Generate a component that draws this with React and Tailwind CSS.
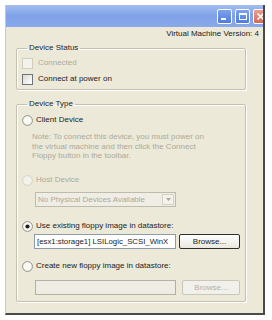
import React from "react";

function Radio({ checked = false, disabled = false }) {
  return (
    <svg width="11" height="11" viewBox="0 0 11 11" className="shrink-0">
      <circle cx="5.5" cy="5.5" r="4.9" fill={disabled ? "#F2F1EB" : "#FAFAF7"} stroke={disabled ? "#D3D1C5" : "#8E8E88"} strokeWidth="1" />
      {checked && <circle cx="5.5" cy="5.5" r="2.1" fill="#1F1F1F" />}
    </svg>
  );
}

function Checkbox({ disabled = false }) {
  return (
    <div
      className={
        disabled
          ? "w-[11px] h-[11px] shrink-0 border border-[#CFCDC0] bg-[#F3F2EC]"
          : "w-[11px] h-[11px] shrink-0 border border-[#6E737C] bg-gradient-to-br from-[#DCDAD2] to-white"
      }
    />
  );
}

function GroupBox({ title, className, children }) {
  return (
    <fieldset className={"ml-[10px] w-[230px] border border-[#C4C1B0] rounded-[2px] shadow-[inset_1px_1px_0_#FFFFFF,1px_1px_0_#FFFFFF] " + className}>
      <legend className="ml-[5px] px-[2px] leading-[10px] text-[#222]">{title}</legend>
      {children}
    </fieldset>
  );
}

export default function App() {
  return (
    <div className="w-[272px] h-[320px] bg-white pt-[5px] pl-[5px] font-['Liberation_Sans',Arial,sans-serif] text-[8px] leading-[10px] text-[#222]">
      <div className="w-[260px] h-[310px] flex flex-col bg-[#ECE9D8] border-l border-l-[#C8C8C8] border-r-2 border-r-[#4A4A4A] border-b-2 border-b-[#4A4A4A] overflow-hidden">
        {/* title bar */}
        <div className="h-[22px] shrink-0 flex items-center justify-end gap-[3px] overflow-hidden bg-gradient-to-b from-[#A3BDF0] via-[#7FA1E8] to-[#8AA9EB]">
          <div className="w-[15px] h-[15px] rounded-[2px] border border-white bg-gradient-to-b from-[#7FA2EE] to-[#4F7BDD] flex items-end pl-[3px] pb-[3px]">
            <div className="w-[5px] h-[2px] bg-white" />
          </div>
          <div className="w-[15px] h-[15px] rounded-[2px] border border-white bg-gradient-to-b from-[#7FA2EE] to-[#4F7BDD] flex items-center justify-center">
            <div className="w-[8px] h-[7px] border border-white border-t-2" />
          </div>
          <div className="w-[15px] h-[15px] mr-[-5px] rounded-[2px] border border-white bg-gradient-to-b from-[#E8A090] to-[#D06A5A] flex items-center justify-center">
            <svg width="9" height="9" viewBox="0 0 9 9">
              <path d="M1.5 1.5L7.5 7.5M7.5 1.5L1.5 7.5" stroke="white" strokeWidth="1.6" />
            </svg>
          </div>
        </div>

        {/* version row */}
        <div className="pt-[2px] pr-[4px] flex justify-end">Virtual Machine Version: 4</div>

        <GroupBox title="Device Status" className="mt-[4px] pl-[5px] pt-[4px] pb-[4px]">
          <div className="flex flex-col gap-[4px]">
            <div className="h-[12px] flex items-center gap-[5px]">
              <Checkbox disabled />
              <span className="text-[#ABA99C]">Connected</span>
            </div>
            <div className="h-[12px] flex items-center gap-[5px]">
              <Checkbox />
              <span>Connect at power on</span>
            </div>
          </div>
        </GroupBox>

        <GroupBox title="Device Type" className="mt-[9px] pl-[5px] pb-[6px]">
          <div className="flex flex-col">
            <div className="mt-[5px] h-[12px] flex items-center gap-[3px]">
              <Radio />
              <span>Client Device</span>
            </div>
            <p className="mt-[6px] ml-[10px] leading-[9.5px] text-[#ABA99C]">
              Note: To connect this device, you must power on
              <br />
              the virtual machine and then click the Connect
              <br />
              Floppy button in the toolbar.
            </p>

            <div className="mt-[13.5px] h-[12px] flex items-center gap-[3px]">
              <Radio disabled />
              <span className="text-[#ABA99C]">Host Device</span>
            </div>
            <div className="mt-[6px] ml-[13px] w-[141px] h-[15px] flex items-center border border-[#BDBBAE] bg-[#EFEDE4]">
              <span className="flex-1 pl-[2px] text-[#ABA99C] whitespace-nowrap overflow-hidden">No Physical Devices Available</span>
              <div className="w-[12px] h-[11px] mr-[1px] flex items-center justify-center border border-[#D4D2C6] bg-[#F3F2EC]">
                <svg width="5" height="3" viewBox="0 0 5 3">
                  <path d="M0 0H5L2.5 3Z" fill="#A9A79A" />
                </svg>
              </div>
            </div>

            <div className="mt-[13px] h-[12px] flex items-center gap-[3px]">
              <Radio checked />
              <span>Use existing floppy image in datastore:</span>
            </div>
            <div className="mt-[2px] ml-[12px] flex items-center gap-[3px]">
              <div className="w-[142px] h-[15px] flex items-center pl-[2px] border border-[#8D9BAA] bg-white whitespace-nowrap overflow-hidden">
                <span className="text-[7.8px]">[esx1:storage1] LSILogic_SCSI_WinX</span>
              </div>
              <div className="w-[61px] h-[15px] flex items-center justify-center rounded-[2px] border border-[#2E2E2E] bg-gradient-to-b from-white to-[#E9E7DE]">
                Browse...
              </div>
            </div>

            <div className="mt-[11px] h-[12px] flex items-center gap-[3px]">
              <Radio />
              <span>Create new floppy image in datastore:</span>
            </div>
            <div className="mt-[8px] ml-[13px] flex items-center gap-[6px]">
              <div className="w-[141px] h-[15px] border border-[#B3B1A4] bg-[#EEECE3]" />
              <div className="w-[58px] h-[15px] flex items-center justify-center rounded-[2px] border border-[#C9C7BA] bg-[#F1F0EA] text-[#B3B1A4]">
                Browse...
              </div>
            </div>
          </div>
        </GroupBox>
      </div>
    </div>
  );
}
